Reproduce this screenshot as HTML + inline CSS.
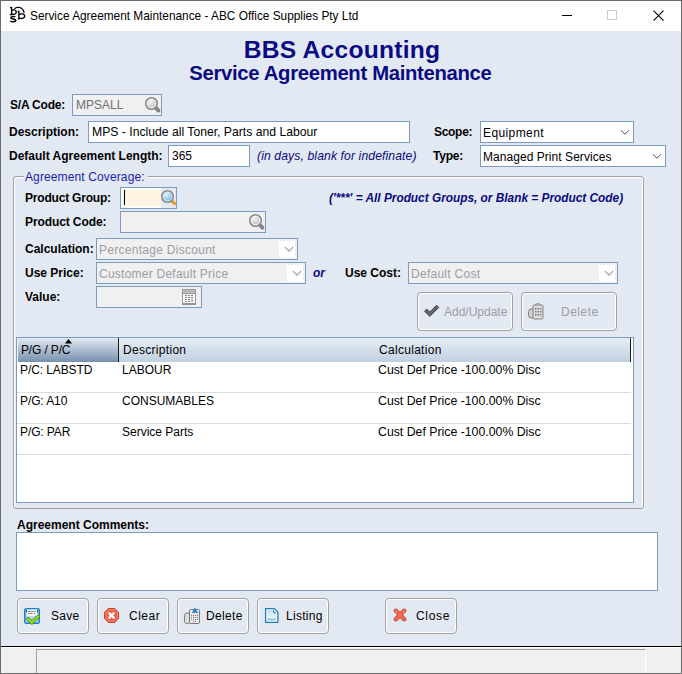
<!DOCTYPE html>
<html><head><meta charset="utf-8">
<style>
*{box-sizing:border-box}
html,body{margin:0;padding:0}
body{width:682px;height:674px;position:relative;overflow:hidden;background:#e3e9f3;font-family:"Liberation Sans",sans-serif;font-size:12px;color:#000}
.a{position:absolute;white-space:nowrap}
.l{position:absolute;white-space:nowrap;font-weight:bold;line-height:14px}
.t{position:absolute;white-space:nowrap;line-height:14px}
.box{position:absolute;border:1px solid #7b9cc0;background:#fff}
.dis{background:#f0f0f0}
.gray{color:#6f6f78}
.dt{color:#9d9ca4}
.nav{color:#0a0a82}
.btn{position:absolute;border:1px solid #a2a2a2;border-radius:4px;box-shadow:inset 0 0 0 1px #fff;background:#e3e9f3}
svg{position:absolute;overflow:visible}
</style></head><body>
<!-- window frame -->
<div class="a" style="left:0;top:0;width:682px;height:674px;border:1px solid #6b6b6b"></div>
<div class="a" style="left:1px;top:1px;width:680px;height:30px;background:#fff"></div>
<!-- title icon -->
<svg style="left:6px;top:4px" width="24" height="22" viewBox="0 0 24 22">
 <g fill="none" stroke="#000" stroke-width="1.3">
  <path d="M4 3.6H5.6V10.6H3.9"/><path d="M5.6 6.7C6.4 5.6 10.3 5.4 10.3 8.1C10.3 10.8 6.4 10.7 5.6 9.6"/>
  <path d="M11.6 7.5H12.9V14.8H11.8"/><path d="M12.9 10.9C13.7 9.5 18.7 9.3 18.7 12.1C18.7 15 13.7 14.9 12.9 13.7"/>
  <path d="M8.4 4.7C10.6 2.5 16.3 2.3 18.2 8.7" stroke-width="1.25"/>
  <path d="M9.3 13C8.6 12.2 4.8 12.1 4.8 13.8C4.8 15.3 9.7 14.5 9.7 16.3C9.7 18.1 5 18 4.3 16.8" stroke-width="1.55"/>
 </g>
</svg>
<div class="t" style="left:30px;top:9px;font-size:11.85px">Service Agreement Maintenance - ABC Office Supplies Pty Ltd</div>
<!-- caption buttons -->
<div class="a" style="left:562px;top:15px;width:10px;height:1px;background:#000"></div>
<div class="a" style="left:607px;top:10px;width:10px;height:10px;border:1px solid #cccccc"></div>
<svg style="left:652px;top:9px" width="13" height="13" viewBox="0 0 13 13"><path d="M1 1L11 11M11 1L1 11" stroke="#000" stroke-width="1.1" transform="translate(0.5 0.6)"/></svg>

<!-- headings -->
<div class="a nav" style="left:1px;width:682px;text-align:center;top:35.6px;font-size:24.6px;line-height:28px;font-weight:bold;letter-spacing:0.25px">BBS Accounting</div>
<div class="a nav" style="left:-0.6px;width:682px;text-align:center;top:62px;font-size:20.3px;line-height:23px;font-weight:bold;letter-spacing:-0.32px">Service Agreement Maintenance</div>

<!-- S/A Code -->
<div class="l" style="left:10px;top:98px;letter-spacing:-0.2px">S/A Code:</div>
<div class="box dis" style="left:72px;top:94px;width:90px;height:22px"></div>
<div class="t gray" style="left:76px;top:98px">MPSALL</div>
<svg style="left:144px;top:96px" width="18" height="18" viewBox="0 0 18 18">
 <defs><radialGradient id="gg" cx="0.4" cy="0.35" r="0.7"><stop offset="0" stop-color="#f4f4f4"/><stop offset="1" stop-color="#b4b4b4"/></radialGradient></defs>
 <path d="M11.8 11.8L14.4 14.6" stroke="#7c7c7c" stroke-width="3.8" stroke-linecap="round"/>
 <path d="M12.6 13L14 14.5" stroke="#b4b4b4" stroke-width="1" stroke-linecap="round"/>
 <circle cx="7.5" cy="7.5" r="5.7" fill="url(#gg)" stroke="#8c8c8c" stroke-width="1.7"/>
 <circle cx="7.5" cy="7.5" r="4.35" fill="none" stroke="#fbfbfb" stroke-width="1"/>
</svg>

<!-- Description -->
<div class="l" style="left:9px;top:125px">Description:</div>
<div class="box" style="left:88px;top:121px;width:322px;height:22px"></div>
<div class="t" style="left:92px;top:125px;font-size:12.2px">MPS - Include all Toner, Parts and Labour</div>

<div class="l" style="left:434px;top:125px;letter-spacing:-0.3px">Scope:</div>
<div class="box" style="left:480px;top:121px;width:154px;height:22px"></div>
<div class="t" style="left:483px;top:126px;letter-spacing:0.4px">Equipment</div>
<svg style="left:620px;top:129px" width="10" height="7" viewBox="0 0 10 7"><path d="M1 1.2L5 5.2L9 1.2" fill="none" stroke="#4a4a4a" stroke-width="1"/></svg>

<div class="l" style="left:9px;top:149px">Default Agreement Length:</div>
<div class="box" style="left:168px;top:145px;width:82px;height:22px"></div>
<div class="t" style="left:172px;top:149px">365</div>
<div class="t nav" style="left:257px;top:149px;font-style:italic;font-size:12.2px;letter-spacing:0.1px">(in days, blank for indefinate)</div>

<div class="l" style="left:433px;top:149px;letter-spacing:-0.2px">Type:</div>
<div class="box" style="left:480px;top:145px;width:186px;height:22px"></div>
<div class="t" style="left:483px;top:150px;letter-spacing:0.05px">Managed Print Services</div>
<svg style="left:652px;top:153px" width="10" height="7" viewBox="0 0 10 7"><path d="M1 1.2L5 5.2L9 1.2" fill="none" stroke="#4a4a4a" stroke-width="1"/></svg>

<!-- group box -->
<div class="a" style="left:13px;top:176px;width:631px;height:333px;border:1px solid #a0a0a0;border-radius:3px;box-shadow:inset 1px 1px 0 #fff,inset -1px 0 0 #fff"></div>
<div class="a" style="left:24px;top:168px;width:124px;height:14px;background:#e3e9f3"></div>
<div class="t" style="left:25px;top:170px;color:#1c1cae;letter-spacing:0.12px">Agreement Coverage:</div>

<div class="l" style="left:25px;top:191px;letter-spacing:-0.2px">Product Group:</div>
<div class="box" style="left:120px;top:187px;width:57px;height:22px;background:#fff"></div>
<div class="a" style="left:123px;top:190px;width:38px;height:16px;background:#fff4e2"></div>
<div class="a" style="left:161px;top:188px;width:15px;height:20px;background:#e4e9f1"></div>
<div class="a" style="left:124px;top:190px;width:1px;height:15px;background:#000"></div>
<svg style="left:160px;top:189px" width="17" height="18" viewBox="0 0 17 18">
 <defs><radialGradient id="bg" cx="0.4" cy="0.35" r="0.7"><stop offset="0" stop-color="#e4f4ff"/><stop offset="1" stop-color="#5aaee6"/></radialGradient></defs>
 <path d="M11.6 11.6L14.6 14.6" stroke="#e59a35" stroke-width="3.2" stroke-linecap="round"/>
 <circle cx="7.5" cy="7.5" r="5.7" fill="url(#bg)" stroke="#8c8c8c" stroke-width="1.7"/>
 <circle cx="7.5" cy="7.5" r="4.5" fill="none" stroke="#f4f4f4" stroke-width="0.8"/>
</svg>
<div class="t nav" style="left:329px;top:191px;font-style:italic;font-weight:bold;font-size:11.85px">('***' = All Product Groups, or Blank = Product Code)</div>

<div class="l" style="left:25px;top:215px;letter-spacing:-0.1px">Product Code:</div>
<div class="box dis" style="left:120px;top:211px;width:146px;height:22px"></div>
<svg style="left:248px;top:213px" width="18" height="18" viewBox="0 0 18 18">
 <path d="M11.8 11.8L14.4 14.6" stroke="#7c7c7c" stroke-width="3.8" stroke-linecap="round"/>
 <path d="M12.6 13L14 14.5" stroke="#b4b4b4" stroke-width="1" stroke-linecap="round"/>
 <circle cx="7.5" cy="7.5" r="5.7" fill="url(#gg)" stroke="#8c8c8c" stroke-width="1.7"/>
 <circle cx="7.5" cy="7.5" r="4.35" fill="none" stroke="#fbfbfb" stroke-width="1"/>
</svg>

<div class="l" style="left:25px;top:242px">Calculation:</div>
<div class="box dis" style="left:96px;top:238px;width:202px;height:22px"></div>
<div class="a" style="left:279px;top:241px;width:16px;height:17px;background:#fff"></div>
<div class="t dt" style="left:99px;top:243px;letter-spacing:0.28px">Percentage Discount</div>
<svg style="left:284px;top:246px" width="10" height="7" viewBox="0 0 10 7"><path d="M1 1.2L5 5.2L9 1.2" fill="none" stroke="#9a9a9a" stroke-width="1.1"/></svg>

<div class="l" style="left:25px;top:266px">Use Price:</div>
<div class="box dis" style="left:96px;top:262px;width:210px;height:22px"></div>
<div class="a" style="left:287px;top:265px;width:16px;height:17px;background:#fff"></div>
<div class="t dt" style="left:99px;top:267px;letter-spacing:0.24px">Customer Default Price</div>
<svg style="left:292px;top:270px" width="10" height="7" viewBox="0 0 10 7"><path d="M1 1.2L5 5.2L9 1.2" fill="none" stroke="#9a9a9a" stroke-width="1.1"/></svg>
<div class="t nav" style="left:313px;top:266px;font-style:italic;font-weight:bold">or</div>

<div class="l" style="left:345px;top:266px">Use Cost:</div>
<div class="box dis" style="left:408px;top:262px;width:210px;height:22px"></div>
<div class="a" style="left:599px;top:265px;width:16px;height:17px;background:#fff"></div>
<div class="t dt" style="left:411px;top:267px;letter-spacing:0.27px">Default Cost</div>
<svg style="left:604px;top:270px" width="10" height="7" viewBox="0 0 10 7"><path d="M1 1.2L5 5.2L9 1.2" fill="none" stroke="#9a9a9a" stroke-width="1.1"/></svg>

<div class="l" style="left:25px;top:290px">Value:</div>
<div class="box dis" style="left:96px;top:286px;width:106px;height:22px"></div>
<svg style="left:182px;top:289px" width="14" height="16" viewBox="0 0 14 16" shape-rendering="crispEdges">
 <rect x="0" y="0" width="14" height="16" fill="#969696"/>
 <rect x="1" y="1" width="12" height="3" fill="#c4c4c4"/><rect x="2" y="2" width="10" height="1" fill="#a8a8a8"/>
 <rect x="1" y="5" width="12" height="9" fill="#fafafa"/>
 <g fill="#7e7e7e"><rect x="3" y="6" width="2" height="1"/><rect x="6" y="6" width="2" height="1"/><rect x="9" y="6" width="2" height="1"/>
 <rect x="3" y="8" width="2" height="1"/><rect x="6" y="8" width="2" height="1"/><rect x="9" y="8" width="2" height="1"/>
 <rect x="3" y="10" width="2" height="1"/><rect x="6" y="10" width="2" height="1"/><rect x="9" y="10" width="2" height="3" fill="#b4b4b4"/>
 <rect x="3" y="12" width="2" height="1"/><rect x="6" y="12" width="2" height="1"/></g>
</svg>

<div class="btn" style="left:417px;top:292px;width:96px;height:39px"></div>
<svg style="left:423px;top:304px" width="17" height="14" viewBox="0 0 17 14">
 <path d="M1.5 7.2L3.8 5L6.8 8L13.6 1.2L15.8 3.4L6.8 12.4Z" fill="#656565" stroke="#3c3c3c" stroke-width="0.9" stroke-linejoin="round"/>
</svg>
<div class="t dt" style="left:444px;top:305px">Add/Update</div>
<div class="btn" style="left:521px;top:292px;width:96px;height:39px"></div>
<svg style="left:527px;top:302px" width="18" height="18" viewBox="0 0 18 18">
 <rect x="1.5" y="7" width="6" height="9" rx="2.5" fill="#cfcfcf" stroke="#7a7a7a" stroke-width="0.9"/>
 <rect x="6" y="3" width="10" height="14" rx="1.5" fill="#dcdcdc" stroke="#767676" stroke-width="0.9"/>
 <path d="M8.5 3.2c0-2 5-2 5 0" fill="#bdbdbd" stroke="#777" stroke-width="0.8"/>
 <g fill="#777"><rect x="8" y="6" width="1.5" height="1.5"/><rect x="10.5" y="6" width="1.5" height="1.5"/><rect x="13" y="6" width="1.5" height="1.5"/>
 <rect x="8" y="9" width="1.5" height="1.5"/><rect x="10.5" y="9" width="1.5" height="1.5"/><rect x="13" y="9" width="1.5" height="1.5"/>
 <rect x="8" y="12" width="1.5" height="1.5"/><rect x="10.5" y="12" width="1.5" height="1.5"/><rect x="13" y="12" width="1.5" height="1.5"/></g>
</svg>
<div class="t dt" style="left:561px;top:305px;letter-spacing:0.5px">Delete</div>

<!-- grid -->
<div class="box" style="left:16px;top:337px;width:618px;height:166px;border-color:#7b9cc0"></div>
<div class="a" style="left:17px;top:338px;width:1px;height:24px;background:#f2f5f9"></div>
<div class="a" style="left:18px;top:338px;width:613px;height:24px;background:linear-gradient(#e7edf5,#c0d0e1)"></div>
<div class="a" style="left:18px;top:338px;width:100px;height:24px;background:linear-gradient(#e4eaf2,#7590ae)"></div>
<div class="a" style="left:118px;top:338px;width:1px;height:24px;background:#1a1a1a"></div>
<div class="a" style="left:630px;top:338px;width:1px;height:24px;background:#1a1a1a"></div>
<svg style="left:65px;top:339px" width="8" height="5" viewBox="0 0 8 5"><path d="M0 4.5L3.5 0L7 4.5Z" fill="#000"/></svg>
<div class="t" style="left:21px;top:343px;letter-spacing:-0.15px">P/G / P/C</div>
<div class="t" style="left:123px;top:343px;letter-spacing:0.3px">Description</div>
<div class="t" style="left:379px;top:343px;letter-spacing:0.3px">Calculation</div>

<div class="a" style="left:17px;top:392px;width:614px;height:1px;background:#dcdcdc"></div>
<div class="a" style="left:17px;top:423px;width:614px;height:1px;background:#dcdcdc"></div>
<div class="a" style="left:17px;top:454px;width:614px;height:1px;background:#dcdcdc"></div>
<div class="t" style="left:20px;top:363px;letter-spacing:-0.1px">P/C: LABSTD</div>
<div class="t" style="left:122px;top:363px">LABOUR</div>
<div class="t" style="left:378px;top:363px;font-size:12.3px">Cust Def Price -100.00% Disc</div>
<div class="t" style="left:20px;top:394px;letter-spacing:-0.1px">P/G: A10</div>
<div class="t" style="left:122px;top:394px">CONSUMABLES</div>
<div class="t" style="left:378px;top:394px;font-size:12.3px">Cust Def Price -100.00% Disc</div>
<div class="t" style="left:20px;top:425px;letter-spacing:-0.1px">P/G: PAR</div>
<div class="t" style="left:122px;top:425px">Service Parts</div>
<div class="t" style="left:378px;top:425px;font-size:12.3px">Cust Def Price -100.00% Disc</div>

<div class="l" style="left:17px;top:518px">Agreement Comments:</div>
<div class="box" style="left:16px;top:532px;width:642px;height:59px"></div>

<!-- buttons -->
<div class="btn" style="left:17px;top:598px;width:72px;height:36px"></div>
<svg style="left:24px;top:608px" width="17" height="17" viewBox="0 0 17 17">
 <rect x="0.75" y="0.75" width="14.5" height="14.5" rx="1.6" fill="#b3dbf7" stroke="#1c7fd0" stroke-width="1.5"/>
 <path d="M2.8 1.4H13.6V7.2Q13.6 7.9 12.9 7.9H3.5Q2.8 7.9 2.8 7.2Z" fill="#fdfdfd"/>
 <rect x="2" y="2" width="1" height="2.5" fill="#1a4f8a"/><rect x="13" y="2" width="1" height="2.5" fill="#1a4f8a"/>
 <g fill="#7a7a7a"><rect x="4" y="3" width="2.6" height="1"/><rect x="7.3" y="3" width="1.6" height="1"/><rect x="9.6" y="3" width="2.2" height="1"/>
 <rect x="4" y="5" width="1.6" height="1"/><rect x="6.3" y="5" width="2.4" height="1"/><rect x="10" y="5" width="1.2" height="1"/></g>
 <path d="M3.8 10.8L7.9 14.8L14.4 8.3" fill="none" stroke="#3f8f0c" stroke-width="3.6" stroke-linecap="round" stroke-linejoin="round"/>
 <path d="M3.8 10.8L7.9 14.8L14.4 8.3" fill="none" stroke="#9bdc22" stroke-width="2" stroke-linecap="round" stroke-linejoin="round"/>
</svg>
<div class="t" style="left:51px;top:609px;letter-spacing:0.3px">Save</div>

<div class="btn" style="left:97px;top:598px;width:72px;height:36px"></div>
<svg style="left:104px;top:608px" width="15" height="15" viewBox="0 0 15 15">
 <path d="M4.4 0.5h6.2l3.9 3.9v6.2l-3.9 3.9h-6.2l-3.9-3.9v-6.2z" fill="#ee5a42" stroke="#c9382a"/>
 <path d="M4.9 1.7h5.2l3.2 3.2v5.2l-3.2 3.2h-5.2l-3.2-3.2v-5.2z" fill="none" stroke="#f7a291" stroke-width="0.8"/>
 <path d="M4.7 4.7L10.3 10.3M10.3 4.7L4.7 10.3" stroke="#fff" stroke-width="2.6"/>
</svg>
<div class="t" style="left:129px;top:609px;letter-spacing:0.5px">Clear</div>

<div class="btn" style="left:177px;top:598px;width:72px;height:36px"></div>
<svg style="left:184px;top:607px" width="17" height="18" viewBox="0 0 17 18">
 <rect x="0.5" y="6" width="5.6" height="10.5" rx="2.4" fill="#dcdcdc" stroke="#727272" stroke-width="0.9"/>
 <rect x="5.5" y="2.5" width="10" height="14" rx="1.3" fill="#ededed" stroke="#6a6a6a" stroke-width="0.9"/>
 <rect x="6.5" y="3.4" width="8" height="2.6" fill="#fafafa"/>
 <path d="M8.2 5.6L10.8 1L13.8 5.6Z" fill="#2a8ad8" stroke="#1f6db2" stroke-width="0.6"/>
 <g fill="#666"><circle cx="7.6" cy="8.3" r="0.6"/><circle cx="9.6" cy="8.3" r="0.6"/><circle cx="11.6" cy="8.3" r="0.6"/><circle cx="13.6" cy="8.3" r="0.6"/>
 <circle cx="7.6" cy="10.3" r="0.6"/><circle cx="9.6" cy="10.3" r="0.6"/><circle cx="11.6" cy="10.3" r="0.6"/><circle cx="13.6" cy="10.3" r="0.6"/>
 <circle cx="7.6" cy="12.3" r="0.6"/><circle cx="9.6" cy="12.3" r="0.6"/><circle cx="11.6" cy="12.3" r="0.6"/><circle cx="13.6" cy="12.3" r="0.6"/>
 <circle cx="9.6" cy="14.3" r="0.6"/><circle cx="11.6" cy="14.3" r="0.6"/></g>
</svg>
<div class="t" style="left:206px;top:609px;letter-spacing:0.35px">Delete</div>

<div class="btn" style="left:257px;top:598px;width:72px;height:36px"></div>
<svg style="left:264px;top:607px" width="15" height="17" viewBox="0 0 15 17">
 <defs><linearGradient id="dg" x1="0" y1="0" x2="0" y2="1"><stop offset="0" stop-color="#bfe0ee"/><stop offset="1" stop-color="#e4f2f8"/></linearGradient></defs>
 <path d="M1.6 1.6H10.4L13.9 5.1V15.3H1.6Z" fill="#fff" stroke="#1f7bbd" stroke-width="1.3" stroke-linejoin="round"/>
 <path d="M3.2 3.1H8.8V5.8Q8.8 6.9 9.9 6.9H12.2V10.2H3.2Z" fill="url(#dg)"/>
 <rect x="3.2" y="11" width="9" height="2.8" fill="#a8d3e4"/>
 <path d="M9.6 3V4.8Q9.6 5.9 10.7 5.9H12" fill="none" stroke="#1f7bbd" stroke-width="1.1"/>
</svg>
<div class="t" style="left:286px;top:609px;letter-spacing:0.3px">Listing</div>

<div class="btn" style="left:385px;top:598px;width:72px;height:36px"></div>
<svg style="left:392px;top:607px" width="16" height="16" viewBox="0 0 16 16">
 <path d="M3.8 2.5L12.2 10.9M12.2 2.5L3.8 10.9" stroke="#c93d2d" stroke-width="4.4" stroke-linecap="round" transform="translate(0 1.3)"/>
 <path d="M3.8 2.5L12.2 10.9M12.2 2.5L3.8 10.9" stroke="#f0684f" stroke-width="2.8" stroke-linecap="round" transform="translate(0 1.3)"/>
 <path d="M3.2 2.8L5 4.6M12.8 2.8L11 4.6" stroke="#f9b0a0" stroke-width="1" stroke-linecap="round" transform="translate(0 1.3)"/>
</svg>
<div class="t" style="left:416px;top:609px;letter-spacing:0.7px">Close</div>

<!-- status bar -->
<div class="a" style="left:1px;top:646px;width:680px;height:1px;background:#000"></div>
<div class="a" style="left:1px;top:647px;width:680px;height:1px;background:#fff"></div>
<div class="a" style="left:1px;top:648px;width:680px;height:25px;background:#f0f0f0"></div>
<div class="a" style="left:36px;top:649px;width:610px;height:24px;border-left:1px solid #a0a0a0;border-top:1px solid #a0a0a0;border-right:1px solid #fff"></div>
<div class="a" style="left:0;top:673px;width:682px;height:1px;background:#6b6b6b"></div>
</body></html>
